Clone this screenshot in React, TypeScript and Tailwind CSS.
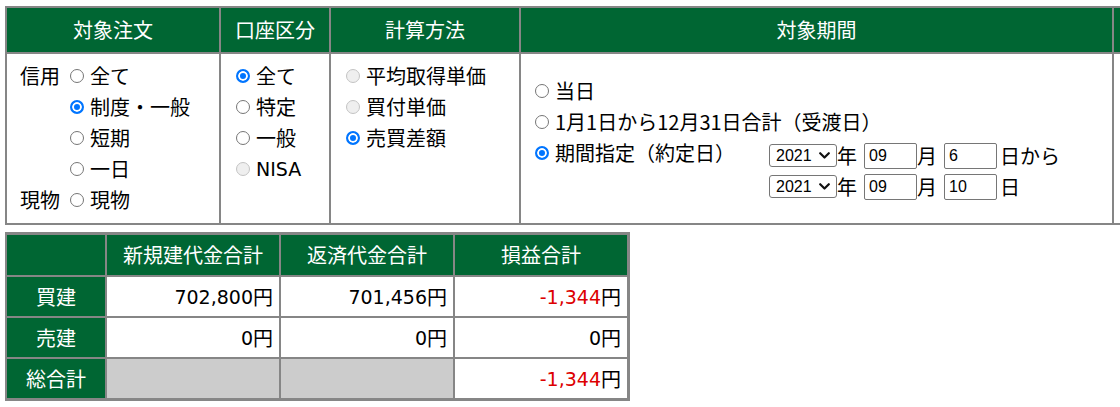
import type { ReactNode } from 'react';

function Radio({ name, checked, disabled, label }: { name: string; checked?: boolean; disabled?: boolean; label: ReactNode }) {
  return (
    <label className="flex h-[31px] items-center gap-[6px] whitespace-nowrap">
      <input
        type="radio"
        name={name}
        defaultChecked={checked}
        disabled={disabled}
        className="m-0 h-[14px] w-[14px] shrink-0 appearance-none rounded-full border border-[#767676] bg-white checked:border-2 checked:border-[#0075ff] checked:bg-[#0075ff] checked:shadow-[inset_0_0_0_2px_#fff] disabled:border-[#c4c4c4] disabled:bg-[#efefef]"
      />
      <span>{label}</span>
    </label>
  );
}

function Head({ children }: { children?: ReactNode }) {
  return (
    <div className="flex items-center justify-center bg-[#006633] leading-none text-white">{children}</div>
  );
}

function Num({ children }: { children: ReactNode }) {
  return <span className="font-['DejaVu_Sans',sans-serif] text-[19px]">{children}</span>;
}

function YearSelect() {
  return (
    <div className="relative flex">
      <select
        defaultValue="2021"
        className="h-[23px] w-[68px] appearance-none rounded-[3px] border border-[#767676] bg-white pl-[6px] font-['Liberation_Sans',Arial,sans-serif] text-[16px] leading-none text-black"
      >
        <option value="2020">2020</option>
        <option value="2021">2021</option>
        <option value="2022">2022</option>
      </select>
      <svg
        className="pointer-events-none absolute right-[7px] top-[8px]"
        width="11"
        height="7"
        viewBox="0 0 11 7"
        fill="none"
      >
        <path d="M1.2 1.2 L5.5 5.5 L9.8 1.2" stroke="#111" strokeWidth="2.2" strokeLinecap="round" strokeLinejoin="round" />
      </svg>
    </div>
  );
}

function DateRow({ m, d, suffix }: { m: string; d: string; suffix: string }) {
  return (
    <div className="flex h-[31px] items-center whitespace-nowrap leading-none">
      <YearSelect />
      <span>年</span>
      <input
        type="text"
        defaultValue={m}
        className="ml-[7px] h-[26px] w-[53px] rounded-[2px] border border-[#767676] px-[4px] font-['Liberation_Sans',Arial,sans-serif] text-[16px] text-black"
      />
      <span>月</span>
      <input
        type="text"
        defaultValue={d}
        className="ml-[7px] h-[26px] w-[53px] rounded-[2px] border border-[#767676] px-[4px] font-['Liberation_Sans',Arial,sans-serif] text-[16px] text-black"
      />
      <span className="ml-[3px]">{suffix}</span>
    </div>
  );
}

function Amount({ value, red }: { value?: string; red?: boolean }) {
  if (value === undefined) return <div className="bg-[#cccccc]" />;
  return (
    <div className="flex items-center justify-end bg-white pr-[6px] leading-none">
      <span className={red ? 'text-[#dd0000]' : ''}>
        <Num>{value}</Num>
      </span>
      <span>円</span>
    </div>
  );
}

export default function App() {
  return (
    <div className="h-[407px] w-[1120px] overflow-hidden bg-white pl-[5px] pt-[6px] font-['Noto_Sans_CJK_JP',sans-serif] text-[20px] text-black">
      {/* 検索条件 */}
      <div className="grid w-max grid-cols-[212px_108px_188px_591px_120px] grid-rows-[44px_169px] gap-[2px] bg-[#868686] pb-[2px] pl-[2px] pt-[2px]">
        <Head>対象注文</Head>
        <Head>口座区分</Head>
        <Head>計算方法</Head>
        <Head>対象期間</Head>
        <Head />

        <div className="bg-white pl-[13px] pt-[6px] leading-none">
          <div className="grid grid-cols-[50px_auto] auto-rows-[31px]">
            <div className="flex items-center">信用</div>
            <Radio name="order" label="全て" />
            <div />
            <Radio name="order" label="制度・一般" checked />
            <div />
            <Radio name="order" label="短期" />
            <div />
            <Radio name="order" label="一日" />
            <div className="flex items-center">現物</div>
            <Radio name="order" label="現物" />
          </div>
        </div>

        <div className="flex flex-col bg-white pl-[15px] pt-[6px] leading-none">
          <Radio name="account" label="全て" checked />
          <Radio name="account" label="特定" />
          <Radio name="account" label="一般" />
          <Radio name="account" label={<Num>NISA</Num>} disabled />
        </div>

        <div className="flex flex-col bg-white pl-[15px] pt-[6px] leading-none">
          <Radio name="calc" label="平均取得単価" disabled />
          <Radio name="calc" label="買付単価" disabled />
          <Radio name="calc" label="売買差額" checked />
        </div>

        <div className="flex flex-col justify-center bg-white pl-[14px] leading-none">
          <Radio name="period" label="当日" />
          <Radio name="period" label="1月1日から12月31日合計（受渡日）" />
          <div className="flex items-start">
            <div className="w-[234px]">
              <Radio name="period" label="期間指定（約定日）" checked />
            </div>
            <div className="mt-[3px] flex flex-col">
              <DateRow m="09" d="6" suffix="日から" />
              <DateRow m="09" d="10" suffix="日" />
            </div>
          </div>
        </div>
        <div className="bg-white" />
      </div>

      {/* 集計結果 */}
      <div className="mt-[7px] grid w-max grid-cols-[98px_172px_172px_172px] grid-rows-[40px_39px_39px_39px] gap-[2px] bg-[#868686] pb-[3px] pl-[2px] pr-[3px] pt-[3px]">
        <Head />
        <Head>新規建代金合計</Head>
        <Head>返済代金合計</Head>
        <Head>損益合計</Head>

        <Head>買建</Head>
        <Amount value="702,800" />
        <Amount value="701,456" />
        <Amount value="-1,344" red />

        <Head>売建</Head>
        <Amount value="0" />
        <Amount value="0" />
        <Amount value="0" />

        <Head>総合計</Head>
        <Amount />
        <Amount />
        <Amount value="-1,344" red />
      </div>
    </div>
  );
}
